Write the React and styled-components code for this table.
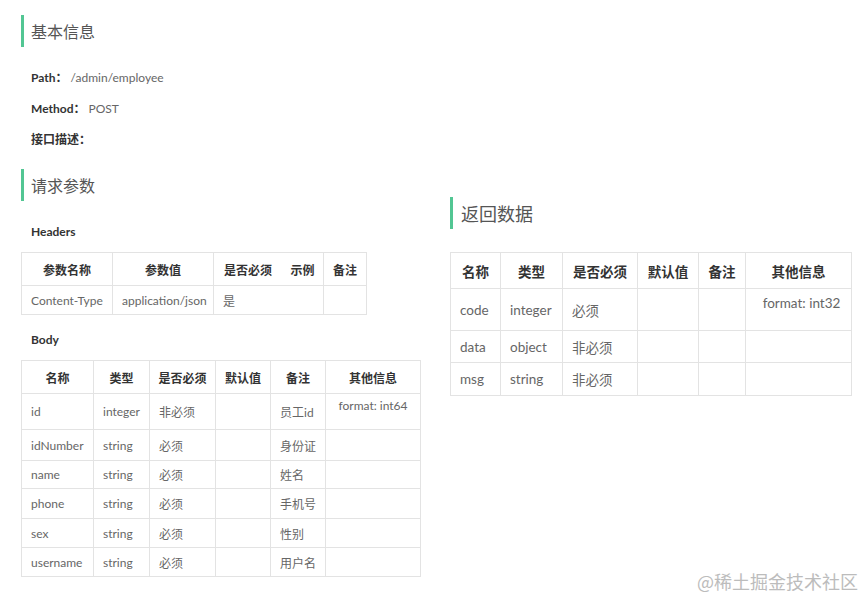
import React from "react";
import styled, { createGlobalStyle } from "styled-components";

const GlobalStyle = createGlobalStyle`
  html, body {
    margin: 0;
    padding: 0;
    background: #fff;
  }
  body {
    font-family: Lato, "Noto Sans CJK SC", sans-serif;
    color: #666;
  }
`;

const headerCols = [91, 101, 67, 43, 43];
const bodyCols = [72, 56, 66, 55, 55, 95];
const returnCols = [50, 62, 75, 61, 47, 106];

const bodyRows = [
  { name: "id", type: "integer", req: "非必须", note: "员工id", other: "format: int64", h: 36 },
  { name: "idNumber", type: "string", req: "必须", note: "身份证", h: 31 },
  { name: "name", type: "string", req: "必须", note: "姓名", h: 28 },
  { name: "phone", type: "string", req: "必须", note: "手机号", h: 30 },
  { name: "sex", type: "string", req: "必须", note: "性别", h: 29 },
  { name: "username", type: "string", req: "必须", note: "用户名", h: 29 },
];

const returnRows = [
  { name: "code", type: "integer", req: "必须", other: "format: int32", h: 42 },
  { name: "data", type: "object", req: "非必须", h: 32 },
  { name: "msg", type: "string", req: "非必须", h: 33 },
];

const App = () => {
  return (
    <Page>
      <GlobalStyle />
      <Column>
        <Title>基本信息</Title>
        <Fields>
          <Field>
            <b>Path：</b> /admin/employee
          </Field>
          <Field>
            <b>Method：</b> POST
          </Field>
          <Field>
            <b>接口描述：</b>
          </Field>
        </Fields>

        <Title $top={14}>请求参数</Title>
        <SubLabel $top={21}>Headers</SubLabel>
        <Table $size={12} $width={345}>
          <colgroup>
            {headerCols.map((w, i) => (
              <col key={i} style={{ width: w }} />
            ))}
          </colgroup>
          <thead>
            <Tr $h={33}>
              <Th>参数名称</Th>
              <Th>参数值</Th>
              <Th $split>是否必须</Th>
              <Th $joined>示例</Th>
              <Th>备注</Th>
            </Tr>
          </thead>
          <tbody>
            <Tr $h={29}>
              <Td>Content-Type</Td>
              <Td>application/json</Td>
              <Td $split>是</Td>
              <Td $joined></Td>
              <Td></Td>
            </Tr>
          </tbody>
        </Table>

        <SubLabel $top={15}>Body</SubLabel>
        <Table $size={12} $width={399}>
          <colgroup>
            {bodyCols.map((w, i) => (
              <col key={i} style={{ width: w }} />
            ))}
          </colgroup>
          <thead>
            <Tr $h={33}>
              <Th>名称</Th>
              <Th>类型</Th>
              <Th>是否必须</Th>
              <Th>默认值</Th>
              <Th>备注</Th>
              <Th>其他信息</Th>
            </Tr>
          </thead>
          <tbody>
            {bodyRows.map((r) => (
              <Tr key={r.name} $h={r.h}>
                <Td>{r.name}</Td>
                <Td>{r.type}</Td>
                <Td>{r.req}</Td>
                <Td></Td>
                <Td>{r.note}</Td>
                <Other $pad={4}>{r.other}</Other>
              </Tr>
            ))}
          </tbody>
        </Table>
      </Column>

      <Column $top={182}>
        <Title $big>返回数据</Title>
        <Table $size={13.5} $width={401} $gap={23}>
          <colgroup>
            {returnCols.map((w, i) => (
              <col key={i} style={{ width: w }} />
            ))}
          </colgroup>
          <thead>
            <Tr $h={36}>
              <Th>名称</Th>
              <Th>类型</Th>
              <Th>是否必须</Th>
              <Th>默认值</Th>
              <Th>备注</Th>
              <Th>其他信息</Th>
            </Tr>
          </thead>
          <tbody>
            {returnRows.map((r) => (
              <Tr key={r.name} $h={r.h}>
                <Td>{r.name}</Td>
                <Td>{r.type}</Td>
                <Td>{r.req}</Td>
                <Td></Td>
                <Td></Td>
                <Other $pad={6} $shift={6}>
                  {r.other}
                </Other>
              </Tr>
            ))}
          </tbody>
        </Table>
      </Column>

      <Watermark>@稀土掘金技术社区</Watermark>
    </Page>
  );
};

const Page = styled.div`
  position: relative;
  display: grid;
  grid-template-columns: 400px 401px;
  column-gap: 29px;
  align-items: start;
  padding: 15px 0 0 21px;
  width: 864px;
  height: 599px;
  box-sizing: border-box;
  overflow: hidden;
`;

const Column = styled.section`
  display: flex;
  flex-direction: column;
  align-items: flex-start;
  padding-top: ${(p) => p.$top || 0}px;
`;

const Title = styled.h2`
  margin: ${(p) => p.$top || 0}px 0 0;
  height: 32px;
  display: flex;
  align-items: center;
  border-left: 3px solid #52c693;
  padding-left: ${(p) => (p.$big ? 8 : 7)}px;
  font-size: ${(p) => (p.$big ? 18 : 16)}px;
  font-weight: 400;
  color: #555;
  font-family: "Noto Sans CJK SC", sans-serif;
`;

const Fields = styled.div`
  margin-top: 15px;
  padding-left: 10px;
  display: flex;
  flex-direction: column;
`;

const Field = styled.div`
  height: 31px;
  line-height: 31px;
  font-size: 12px;
  color: #666;

  b {
    color: #333;
    font-weight: 700;
  }
`;

const SubLabel = styled.div`
  margin-top: ${(p) => p.$top}px;
  padding-left: 10px;
  height: 20px;
  line-height: 20px;
  font-size: 12px;
  font-weight: 700;
  color: #333;
`;

const Table = styled.table`
  margin-top: ${(p) => p.$gap || 10}px;
  width: ${(p) => p.$width}px;
  table-layout: fixed;
  border-collapse: collapse;
  font-size: ${(p) => p.$size}px;
  color: #666;
  font-family: Lato, "Noto Sans CJK SC", sans-serif;
`;

const Tr = styled.tr`
  height: ${(p) => p.$h}px;
`;

const Th = styled.th`
  border: 1px solid #e3e3e3;
  ${(p) => p.$split && "border-right: none;"}
  ${(p) => p.$joined && "border-left: none;"}
  padding: 0 ${(p) => (p.$split || p.$joined ? 10 : 6)}px;
  text-align: ${(p) => (p.$split || p.$joined ? "left" : "center")};
  font-weight: 700;
  color: #333;
  white-space: nowrap;
  overflow: hidden;
`;

const Td = styled.td`
  border: 1px solid #e3e3e3;
  ${(p) => p.$split && "border-right: none;"}
  ${(p) => p.$joined && "border-left: none;"}
  padding: 0 9px;
  text-align: left;
  vertical-align: middle;
  white-space: nowrap;
  overflow: hidden;
`;

const Other = styled.td`
  border: 1px solid #e3e3e3;
  padding: ${(p) => p.$pad}px 6px 0 ${(p) => 6 + (p.$shift || 0)}px;
  text-align: center;
  vertical-align: top;
  white-space: nowrap;
`;

const Watermark = styled.div`
  position: absolute;
  right: 6px;
  bottom: 5px;
  font-size: 18px;
  color: #bcbcbc;
  font-family: "Noto Sans CJK SC", sans-serif;
`;

export default App;
